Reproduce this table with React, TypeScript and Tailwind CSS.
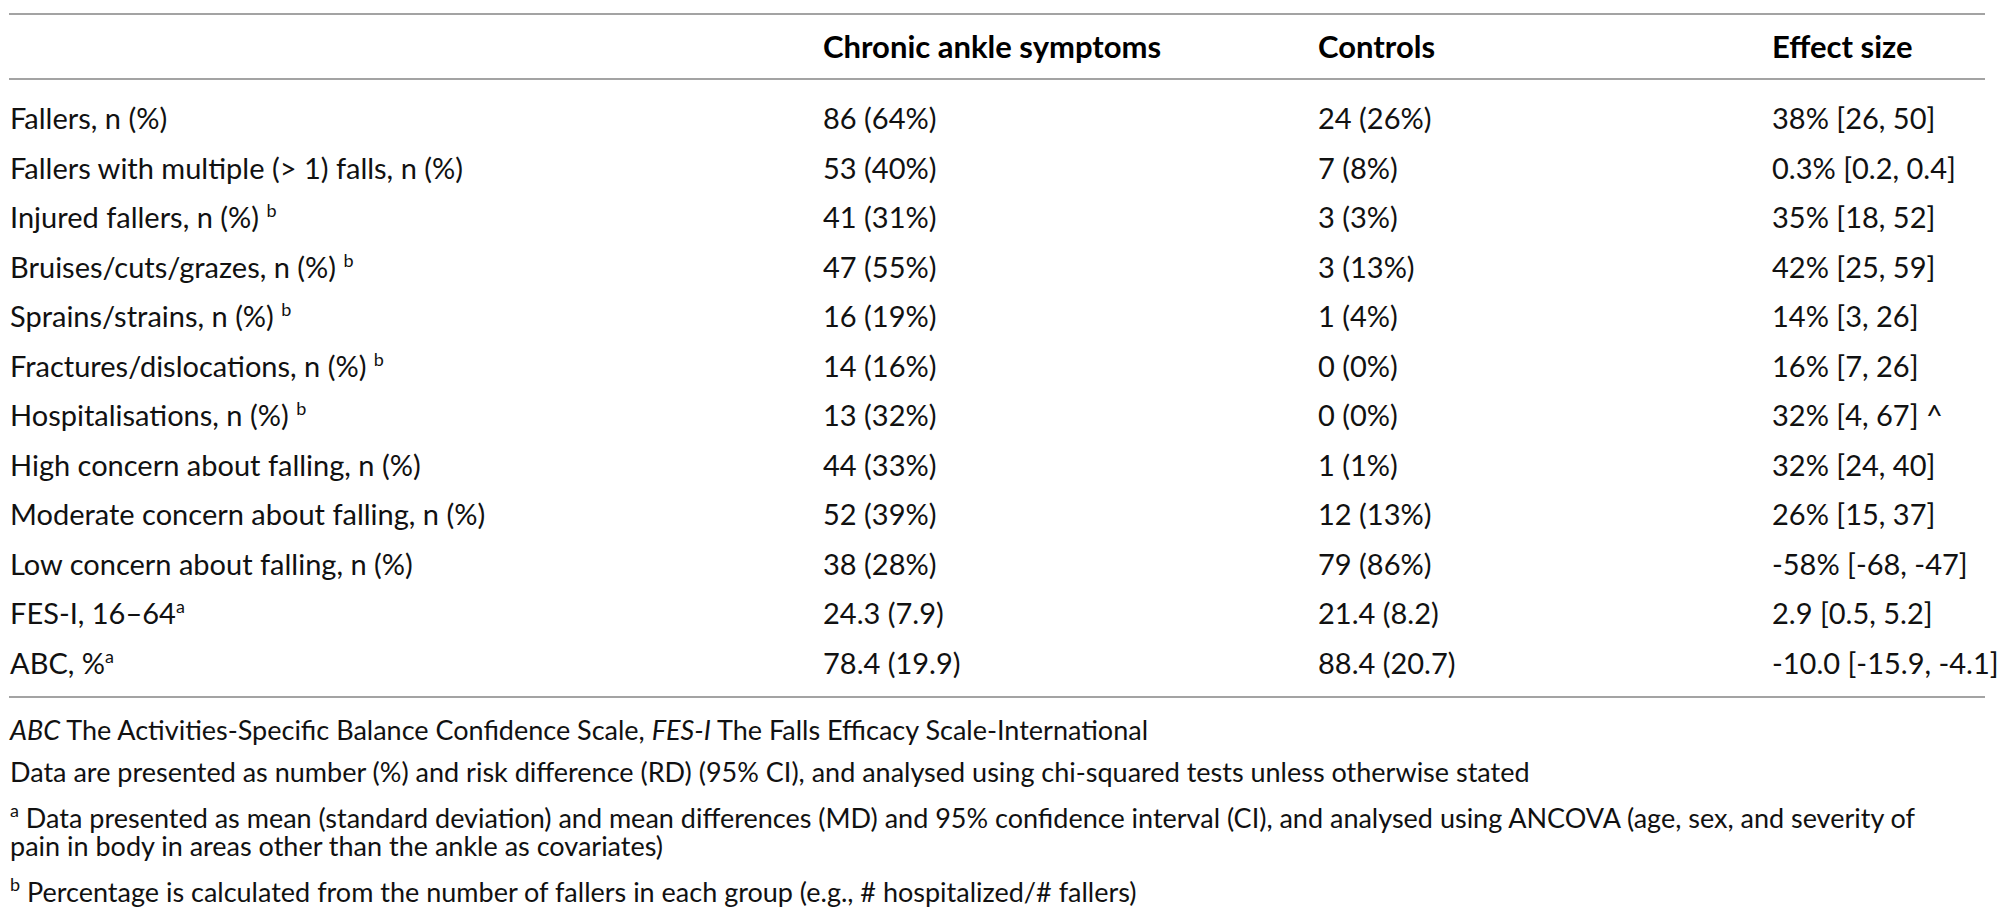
import React from "react";

type Row = { label: React.ReactNode; a: string; b: string; c: string };

const Sup = ({ children, space = false }: { children: React.ReactNode; space?: boolean }) => (
  <>
    {space ? " " : null}
    <sup className="text-[18px] align-baseline relative top-[-11px]">{children}</sup>
  </>
);

const rows: Row[] = [
  { label: "Fallers, n (%)", a: "86 (64%)", b: "24 (26%)", c: "38% [26, 50]" },
  { label: "Fallers with multiple (> 1) falls, n (%)", a: "53 (40%)", b: "7 (8%)", c: "0.3% [0.2, 0.4]" },
  { label: <>Injured fallers, n (%)<Sup space>b</Sup></>, a: "41 (31%)", b: "3 (3%)", c: "35% [18, 52]" },
  { label: <>Bruises/cuts/grazes, n (%)<Sup space>b</Sup></>, a: "47 (55%)", b: "3 (13%)", c: "42% [25, 59]" },
  { label: <>Sprains/strains, n (%)<Sup space>b</Sup></>, a: "16 (19%)", b: "1 (4%)", c: "14% [3, 26]" },
  { label: <>Fractures/dislocations, n (%)<Sup space>b</Sup></>, a: "14 (16%)", b: "0 (0%)", c: "16% [7, 26]" },
  { label: <>Hospitalisations, n (%)<Sup space>b</Sup></>, a: "13 (32%)", b: "0 (0%)", c: "32% [4, 67] ^" },
  { label: "High concern about falling, n (%)", a: "44 (33%)", b: "1 (1%)", c: "32% [24, 40]" },
  { label: "Moderate concern about falling, n (%)", a: "52 (39%)", b: "12 (13%)", c: "26% [15, 37]" },
  { label: "Low concern about falling, n (%)", a: "38 (28%)", b: "79 (86%)", c: "-58% [-68, -47]" },
  { label: <>FES-I, 16–64<Sup>a</Sup></>, a: "24.3 (7.9)", b: "21.4 (8.2)", c: "2.9 [0.5, 5.2]" },
  { label: <>ABC, %<Sup>a</Sup></>, a: "78.4 (19.9)", b: "88.4 (20.7)", c: "-10.0 [-15.9, -4.1]" },
];

export default function App() {
  return (
    <div className="w-[2000px] h-[923px] bg-white text-[#111] font-['Lato',_'Open_Sans',_sans-serif] text-[29px] overflow-hidden">
      <div className="pt-[13px] pl-[9px] w-[1985px]">
        <div className="h-[2px] bg-[#a3a3a3]" />
        <div className="grid grid-cols-[814px_495px_454px_1fr] h-[63px] items-center font-bold text-[31px] text-black">
          <div />
          <div>Chronic ankle symptoms</div>
          <div>Controls</div>
          <div>Effect size</div>
        </div>
        <div className="h-[2px] bg-[#a3a3a3]" />
        <div className="pt-[13px] pb-[9px]">
          {rows.map((r, i) => (
            <div key={i} className="grid grid-cols-[814px_495px_454px_1fr] h-[49.5px] items-center whitespace-nowrap">
              <div className="pl-[1px]">{r.label}</div>
              <div>{r.a}</div>
              <div>{r.b}</div>
              <div>{r.c}</div>
            </div>
          ))}
        </div>
        <div className="h-[2px] bg-[#a3a3a3]" />
        <div className="pl-[1px] text-[27px] leading-[28px] whitespace-nowrap">
          <p className="mt-[18px]">
            <i>ABC</i> The Activities-Specific Balance Confidence Scale, <i>FES-I</i> The Falls Efficacy Scale-International
          </p>
          <p className="mt-[14px]">
            Data are presented as number (%) and risk difference (RD) (95% CI), and analysed using chi-squared tests unless otherwise stated
          </p>
          <p className="mt-[18px]">
            <Sup>a</Sup> Data presented as mean (standard deviation) and mean differences (MD) and 95% confidence interval (CI), and analysed using ANCOVA (age, sex, and severity of
            <br />
            pain in body in areas other than the ankle as covariates)
          </p>
          <p className="mt-[18px]">
            <Sup>b</Sup> Percentage is calculated from the number of fallers in each group (e.g., # hospitalized/# fallers)
          </p>
        </div>
      </div>
    </div>
  );
}
